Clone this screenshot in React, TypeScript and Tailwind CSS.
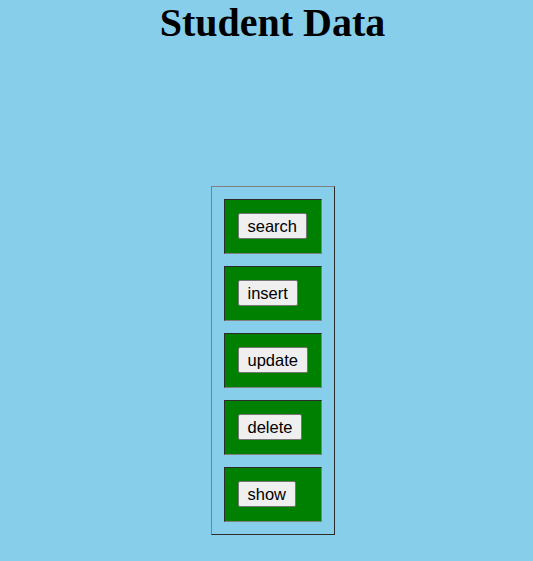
import React from 'react';

const actions = ['search', 'insert', 'update', 'delete', 'show'];

export default function App() {
  return (
    <div className="min-h-screen bg-[#87ceeb] pl-[12px]">
      <h1 className="m-0 text-center font-['Liberation_Serif',serif] text-[40px] font-bold leading-[46px] text-black">
        Student Data
      </h1>

      <div className="mt-[140px] flex justify-center">
        <div className="flex w-[124px] flex-col gap-[12px] border border-t-[#808080] border-l-[#808080] border-b-[#2b2b2b] border-r-[#2b2b2b] p-[12px]">
          {actions.map((action) => (
            <div
              key={action}
              className="h-[55px] w-[98px] border border-t-[#2b2b2b] border-l-[#2b2b2b] border-b-[#808080] border-r-[#808080] bg-[#008000] pl-[13px] pt-[13px]"
            >
              <button
                type="button"
                className="h-[26px] rounded-[2px] border border-[#767676] bg-[#efefef] px-[9px] font-['Liberation_Sans',Arial,sans-serif] text-[16.5px] leading-[18px] text-black"
              >
                {action}
              </button>
            </div>
          ))}
        </div>
      </div>
    </div>
  );
}
